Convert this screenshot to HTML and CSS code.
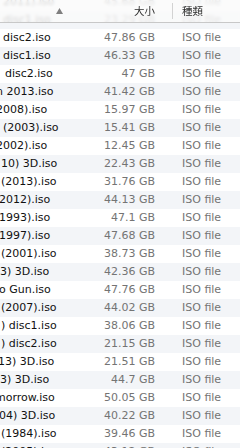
FILE: index.html
```html
<!DOCTYPE html>
<html>
<head>
<meta charset="utf-8">
<link rel="stylesheet" href="styles.css">
</head>
<body>
<div class="view">
  <div class="header">
    <div class="h-name"><svg class="arrow" width="7" height="6" viewBox="0 0 7 6"><path d="M3.5 0 L7 6 L0 6 Z" fill="#7f7f7f"/></svg></div>
    <div class="h-size">大小</div>
    <div class="h-sep"></div>
    <div class="h-kind">種類</div>
  </div>
  <div class="list">
    <div class="row"><div class="name"><span style="margin-left:3px">2011).iso</span></div><div class="size">45.68 GB</div><div class="kind">ISO file</div></div>
    <div class="row"><div class="name"><span style="margin-left:3px">disc1.iso</span></div><div class="size">23.29 GB</div><div class="kind">ISO file</div></div>
    <div class="row"><div class="name"><span style="margin-left:3px">disc2.iso</span></div><div class="size">47.86 GB</div><div class="kind">ISO file</div></div>
    <div class="row"><div class="name"><span style="margin-left:3px">disc1.iso</span></div><div class="size">46.33 GB</div><div class="kind">ISO file</div></div>
    <div class="row"><div class="name"><span style="margin-left:5px">disc2.iso</span></div><div class="size">47 GB</div><div class="kind">ISO file</div></div>
    <div class="row"><div class="name"><span style="margin-left:-4px">n 2013.iso</span></div><div class="size">41.42 GB</div><div class="kind">ISO file</div></div>
    <div class="row"><div class="name"><span style="margin-left:-4px">2008).iso</span></div><div class="size">15.97 GB</div><div class="kind">ISO file</div></div>
    <div class="row"><div class="name"><span style="margin-left:3px">(2003).iso</span></div><div class="size">15.41 GB</div><div class="kind">ISO file</div></div>
    <div class="row"><div class="name"><span style="margin-left:-4px">2002).iso</span></div><div class="size">12.45 GB</div><div class="kind">ISO file</div></div>
    <div class="row"><div class="name"><span style="margin-left:1px">10) 3D.iso</span></div><div class="size">22.43 GB</div><div class="kind">ISO file</div></div>
    <div class="row"><div class="name"><span style="margin-left:1px">(2013).iso</span></div><div class="size">31.76 GB</div><div class="kind">ISO file</div></div>
    <div class="row"><div class="name"><span style="margin-left:-1px">2012).iso</span></div><div class="size">44.13 GB</div><div class="kind">ISO file</div></div>
    <div class="row"><div class="name"><span style="margin-left:-1px">1993).iso</span></div><div class="size">47.1 GB</div><div class="kind">ISO file</div></div>
    <div class="row"><div class="name"><span style="margin-left:-1px">1997).iso</span></div><div class="size">47.68 GB</div><div class="kind">ISO file</div></div>
    <div class="row"><div class="name"><span style="margin-left:1px">(2001).iso</span></div><div class="size">38.73 GB</div><div class="kind">ISO file</div></div>
    <div class="row"><div class="name"><span style="margin-left:0px">3) 3D.iso</span></div><div class="size">42.36 GB</div><div class="kind">ISO file</div></div>
    <div class="row"><div class="name"><span style="margin-left:-1px">o Gun.iso</span></div><div class="size">47.76 GB</div><div class="kind">ISO file</div></div>
    <div class="row"><div class="name"><span style="margin-left:1px">(2007).iso</span></div><div class="size">44.02 GB</div><div class="kind">ISO file</div></div>
    <div class="row"><div class="name"><span style="margin-left:1px">) disc1.iso</span></div><div class="size">38.06 GB</div><div class="kind">ISO file</div></div>
    <div class="row"><div class="name"><span style="margin-left:1px">) disc2.iso</span></div><div class="size">21.15 GB</div><div class="kind">ISO file</div></div>
    <div class="row"><div class="name"><span style="margin-left:-2px">13) 3D.iso</span></div><div class="size">21.51 GB</div><div class="kind">ISO file</div></div>
    <div class="row"><div class="name"><span style="margin-left:0px">3) 3D.iso</span></div><div class="size">44.7 GB</div><div class="kind">ISO file</div></div>
    <div class="row"><div class="name"><span style="margin-left:-5px">morrow.iso</span></div><div class="size">50.05 GB</div><div class="kind">ISO file</div></div>
    <div class="row"><div class="name"><span style="margin-left:-1px">04) 3D.iso</span></div><div class="size">40.22 GB</div><div class="kind">ISO file</div></div>
    <div class="row"><div class="name"><span style="margin-left:1px">(1984).iso</span></div><div class="size">39.46 GB</div><div class="kind">ISO file</div></div>
    <div class="row"><div class="name"><span style="margin-left:1px">(2005).iso</span></div><div class="size">43.12 GB</div><div class="kind">ISO file</div></div>
  </div>
</div>
</body>
</html>
```

FILE: styles.css
```css
html, body {
  margin: 0;
  padding: 0;
  background: #ffffff;
}
body {
  width: 240px;
  height: 448px;
  overflow: hidden;
  font-family: "DejaVu Sans", "Noto Sans CJK TC", sans-serif;
  font-size: 11px;
}
.view {
  position: relative;
  width: 240px;
  height: 448px;
  overflow: hidden;
}
.header {
  position: absolute;
  top: 0;
  left: 0;
  right: 0;
  height: 22px;
  border-bottom: 1px solid #c8c8c8;
  background: rgba(250, 250, 250, 0.84);
  backdrop-filter: blur(1.5px);
  display: flex;
  align-items: center;
  z-index: 2;
}
.h-name {
  width: 68px;
  box-sizing: border-box;
  padding-right: 5px;
  display: flex;
  justify-content: flex-end;
  align-items: center;
}
.arrow {
  display: block;
}
.h-size {
  width: 87px;
  text-align: right;
  font-family: "Noto Sans CJK TC", sans-serif;
  font-size: 10.5px;
  color: #2e2e2e;
  line-height: 22px;
}
.h-sep {
  margin-left: 17px;
  width: 1px;
  height: 16px;
  background: #d3d3d3;
}
.h-kind {
  padding-left: 9px;
  font-family: "Noto Sans CJK TC", sans-serif;
  font-size: 10.5px;
  color: #2e2e2e;
  line-height: 22px;
}
.list {
  margin-top: -7px;
}
.row {
  display: grid;
  grid-template-columns: 68px 87px 1fr;
  height: 18px;
  line-height: 18px;
  background: #ffffff;
}
.row:nth-child(even) {
  background: #f3f5f8;
}
.name {
  overflow: hidden;
  white-space: nowrap;
  color: #111111;
}
.name span {
  display: inline-block;
}
.size {
  text-align: right;
  white-space: nowrap;
  color: #747474;
}
.kind {
  padding-left: 27px;
  white-space: nowrap;
  color: #747474;
}
```
